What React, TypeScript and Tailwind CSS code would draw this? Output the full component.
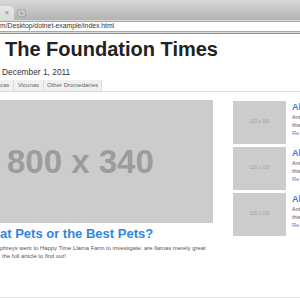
const thumbs = [
  { title: "Alpacas Spotted Near the Lake", lines: ["Ant", "this"] },
  { title: "Alpaca Shearing Season Begins", lines: ["Ant", "this"] },
  { title: "Alpine Llamas Go Exploring", lines: ["Ant", "this"] },
];

function Thumb({ title, lines }: { title: string; lines: string[] }) {
  return (
    <div className="flex gap-[6px]">
      <div className="w-[53px] h-[43px] shrink-0 bg-[#cccccc] flex items-center justify-center">
        <span className="text-[4.5px] text-[#a0a0a0]">120 x 100</span>
      </div>
      <div className="w-[160px] shrink-0 flex flex-col">
        <h4 className="text-[9px] leading-[12px] font-bold text-[#2f86e0] whitespace-nowrap">{title}</h4>
        {lines.map((l, i) => (
          <p key={i} className="text-[5.5px] leading-[8px] text-[#555] whitespace-nowrap">{l}</p>
        ))}
        <a className="text-[5.5px] leading-[8px] text-[#2f86e0] whitespace-nowrap">Re</a>
      </div>
    </div>
  );
}

export default function App() {
  return (
    <div className="w-[300px] h-[300px] overflow-hidden bg-white flex flex-col font-['Liberation_Sans',Arial,sans-serif]">
      {/* browser chrome */}
      <div className="h-[20px] shrink-0 bg-gradient-to-b from-[#d9d9d9] to-[#b3b3b3] flex items-end">
        <div className="w-[14px] h-[14px] bg-gradient-to-b from-[#e6e6e6] to-[#dadada] rounded-tr-[5px] flex items-center justify-center text-[7px] text-[#777]">×</div>
        <div className="ml-[3px] mb-[3px] w-[9px] h-[8px] rounded-[2px] border border-[#a9a9a9] bg-[#c9c9c9] flex items-center justify-center text-[7px] leading-none text-[#888]">+</div>
      </div>
      <div className="h-[14px] shrink-0 bg-[#dadada] border-b border-[#8e8e8e] pt-[1px]">
        <div className="h-[11px] bg-white border-y border-[#a8a8a8] flex items-center text-[6.8px] text-[#333] whitespace-nowrap">
          m/Desktop/dotnet-example/index.html
        </div>
      </div>

      {/* page */}
      <h1 className="mt-[5px] pl-[5px] text-[20px] leading-[20px] font-bold text-[#222] whitespace-nowrap">The Foundation Times</h1>
      <p className="mt-[8px] pl-[2px] text-[8.4px] leading-[10px] text-[#333] whitespace-nowrap">December 1, 2011</p>

      <div className="mt-[3px] h-[12px] flex border-b border-[#dddddd] text-[6px] text-[#666]">
        <div className="w-[14px] bg-[#f0f0f0] border-r border-[#dddddd] flex items-center whitespace-nowrap">cas</div>
        <div className="w-[30px] bg-[#f0f0f0] border-r border-[#dddddd] flex items-center justify-center">Vicunas</div>
        <div className="w-[58px] bg-[#f0f0f0] border-r border-[#dddddd] flex items-center justify-center whitespace-nowrap">Other Dromedaries</div>
      </div>

      <div className="mt-[8px] flex">
        <div className="w-[213px] shrink-0">
          <div className="h-[123px] bg-[#cccccc] flex items-center pl-[7px]">
            <span className="text-[33px] font-bold text-[#9c9c9c] whitespace-nowrap">800 x 340</span>
          </div>
          <h2 className="mt-[3px] text-[13px] leading-[16px] font-bold text-[#2f86e0] whitespace-nowrap">at Pets or the Best Pets?</h2>
          <p className="mt-[2px] text-[5.9px] leading-[8px] text-[#555] whitespace-nowrap">
            phreys went to Happy Time Llama Farm to investigate: are llamas merely great
          </p>
          <p className="pl-[2px] text-[5.9px] leading-[8px] text-[#555] whitespace-nowrap">the full article to find out!</p>
        </div>
        <div className="ml-[20px] mt-[1px] flex flex-col gap-[3px] shrink-0">
          {thumbs.map((t, i) => (
            <Thumb key={i} title={t.title} lines={t.lines} />
          ))}
        </div>
      </div>

      <div className="mt-auto mb-[2px] border-t border-[#e6e6e6]" />
    </div>
  );
}
